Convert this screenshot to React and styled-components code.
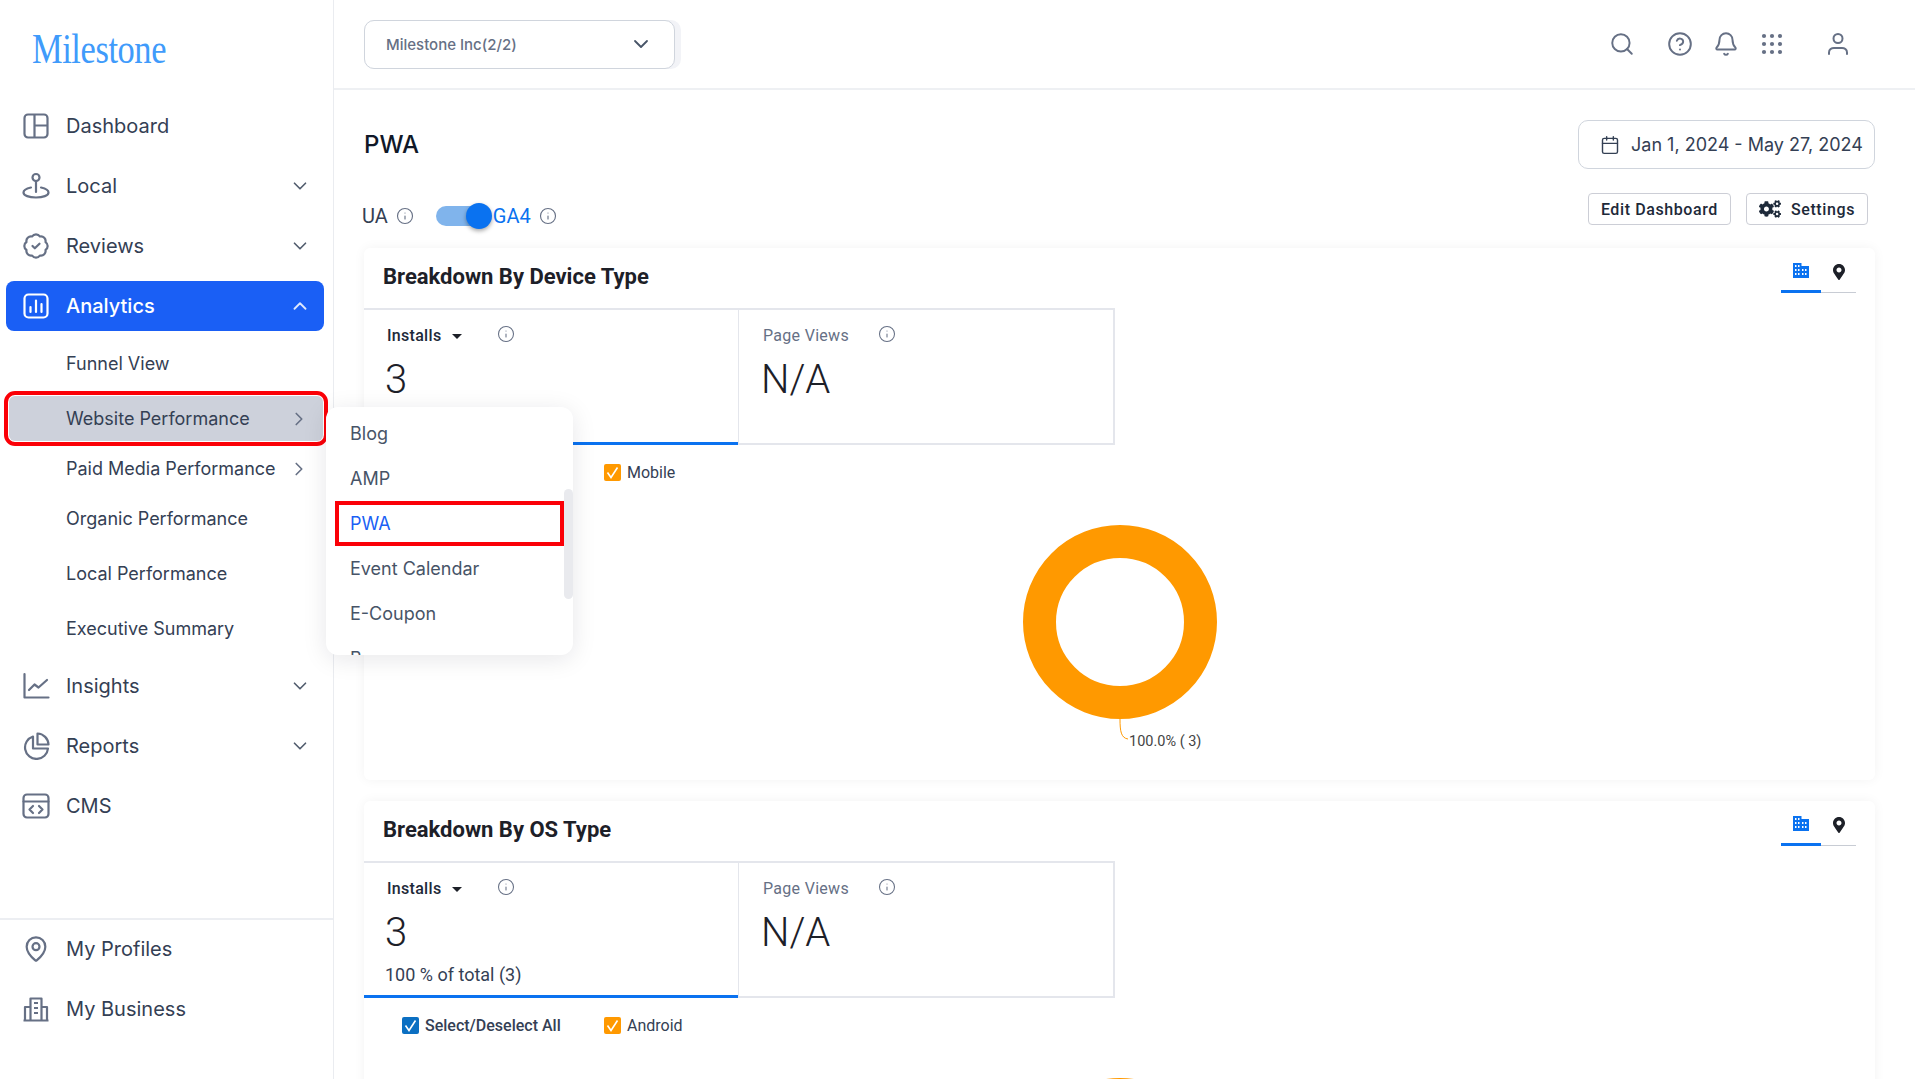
import React from 'react';
import styled, {createGlobalStyle} from 'styled-components';
import {BadgeCheck, Bell, Calendar, ChevronDown, ChevronRight, ChevronUp, CircleHelp, Info, MapPin, Search} from 'lucide-react';
import {FaCogs, FaMapMarkerAlt} from 'react-icons/fa';

const GlobalStyle = createGlobalStyle`
    html, body {
        margin: 0;
        height: 100%;
        overflow: hidden;
        background: #fff;
        font-family: "Inter", "Liberation Sans", sans-serif;
    }
    * {
        box-sizing: border-box;
    }
`;

const DashboardIcon = () => (
    <svg width="28" height="28" viewBox="0 0 28 28" fill="none" stroke="currentColor" strokeWidth="2.2">
        <rect x="2.5" y="2.5" width="23" height="23" rx="3.5" />
        <path d="M12.5 2.5v23M12.5 13.5h13" />
    </svg>
);

const LocalIcon = () => (
    <svg width="28" height="28" viewBox="0 0 28 28" fill="none" stroke="currentColor" strokeWidth="2.2" strokeLinecap="round">
        <circle cx="14" cy="5.5" r="3.5" />
        <path d="M14 9v11M9 15.5C4.5 16.500 1.500 18 1.500 20.500c0 3 5.500 5 12.500 5s12.500-2 12.500-5c0-2.500-3-4-7.500-5" />
    </svg>
);

const AnalyticsIcon = () => (
    <svg width="28" height="28" viewBox="0 0 28 28" fill="none" stroke="currentColor" strokeWidth="2.2" strokeLinecap="round">
        <rect x="2.500" y="2.500" width="23" height="23" rx="4" />
        <path d="M8.500 20v-5M14 20V8.500M19.500 20v-8" />
    </svg>
);

const InsightsIcon = () => (
    <svg width="28" height="28" viewBox="0 0 28 28" fill="none" stroke="currentColor" strokeWidth="2.2" strokeLinecap="round" strokeLinejoin="round">
        <path d="M2.500 2v23.500H26.500M7 18l5.500-5.500 4 3L25 8" />
    </svg>
);

const ReportsIcon = () => (
    <svg width="28" height="28" viewBox="0 0 28 28" fill="none" stroke="currentColor" strokeWidth="2.2" strokeLinejoin="round">
        <path d="M11 4.500A11.500 11.500 0 1 0 26 16.500H11z" />
        <path d="M15.500 1.500A11.500 11.500 0 0 1 26.500 12.500h-11z" />
    </svg>
);

const CmsIcon = () => (
    <svg width="28" height="28" viewBox="0 0 28 28" fill="none" stroke="currentColor" strokeWidth="2.2" strokeLinecap="round" strokeLinejoin="round">
        <rect x="1.500" y="2.500" width="25" height="23" rx="3.500" />
        <path d="M1.500 9.500h25M11 14l-3.500 3.500L11 21M17 14l3.500 3.500L17 21" />
    </svg>
);

const BusinessIcon = () => (
    <svg width="28" height="28" viewBox="0 0 28 28" fill="none" stroke="currentColor" strokeWidth="2.2" strokeLinejoin="round">
        <path d="M1.500 25.500h25M8.500 25.500V3.500h11v22M8.500 12h-5.500v13.500M19.500 12h5.500v13.500" />
        <path d="M12 8h4M12 13h4M12 18h4" />
    </svg>
);

const GridIcon = () => (
    <svg width="24" height="24" viewBox="0 0 24 24" fill="currentColor">
        {[4, 12, 20].map(y => [4, 12, 20].map(x => <circle key={x + '-' + y} cx={x} cy={y} r="2.100" />))}
    </svg>
);

const UserIcon = () => (
    <svg width="24" height="24" viewBox="0 0 24 24" fill="none" stroke="currentColor" strokeWidth="2" strokeLinecap="round">
        <circle cx="12" cy="6.500" r="4.500" />
        <path d="M3 22v-1.500c0-3 2.500-4.500 5-4.500h8c2.500 0 5 1.500 5 4.500V22" />
    </svg>
);

const BuildingIcon = () => (
    <svg width="18" height="16" viewBox="0 0 18 16" fill="currentColor">
        <path d="M1 1h8.500v3H17v12H1zM3 3v2h1.500V3zm3 0v2h1.500V3zM3 7v2h1.500V7zm3 0v2h1.500V7zm4 0v2h1.500V7zm3 0v2h1.500V7zM3 11v2h1.500v-2zm3 0v2h1.500v-2zm4 0v2h1.500v-2zm3 0v2h1.500v-2z" fillRule="evenodd" />
    </svg>
);

const CheckBox = ({color}) => (
    <Box $color={color}>
        <svg width="17" height="17" viewBox="0 0 17 17" fill="none" stroke="#fff" strokeWidth="1.600">
            <path d="M3.500 8.500l3.500 5 6.500-10" />
        </svg>
    </Box>
);

const DonutChart = () => (
    <svg width="300" height="280" viewBox="0 0 300 280">
        <circle cx="150" cy="112" r="80.500" fill="none" stroke="#ff9900" strokeWidth="33" />
        <path d="M150 209c0 12 1 19 8 20" fill="none" stroke="#ff9900" strokeWidth="1" />
        <text x="159" y="236" fontFamily="Roboto, sans-serif" fontSize="14.500" fill="#444">100.0% ( 3)</text>
    </svg>
);

const mainNav = [
    {label: 'Dashboard', icon: <DashboardIcon />},
    {label: 'Local', icon: <LocalIcon />, arrow: 'down'},
    {label: 'Reviews', icon: <BadgeCheck size={28} strokeWidth={1.900} />, arrow: 'down'},
    {label: 'Analytics', icon: <AnalyticsIcon />, arrow: 'up', active: true},
];

const subNav = [
    {label: 'Funnel View'},
    {label: 'Website Performance', arrow: true, selected: true, tight: true},
    {label: 'Paid Media Performance', arrow: true, tight: true},
    {label: 'Organic Performance'},
    {label: 'Local Performance'},
    {label: 'Executive Summary'},
];

const lowerNav = [
    {label: 'Insights', icon: <InsightsIcon />, arrow: 'down'},
    {label: 'Reports', icon: <ReportsIcon />, arrow: 'down'},
    {label: 'CMS', icon: <CmsIcon />},
];

const bottomNav = [
    {label: 'My Profiles', icon: <MapPin size={28} strokeWidth={1.900} />},
    {label: 'My Business', icon: <BusinessIcon />},
];

const popupItems = ['Blog', 'AMP', 'PWA', 'Event Calendar', 'E-Coupon', 'Banner'];

const NavItem = ({item}) => (
    <NavRow $active={item.active}>
        <NavIcon $active={item.active}>{item.icon}</NavIcon>
        <NavLabel>{item.label}</NavLabel>
        {item.arrow === 'down' && <Arrow><ChevronDown size={22} strokeWidth={1.800} /></Arrow>}
        {item.arrow === 'up' && <Arrow><ChevronUp size={22} strokeWidth={2} /></Arrow>}
    </NavRow>
);

const Metric = ({label, value, note, selected}) => (
    <MetricCell $selected={selected}>
        <MetricHead>
            <MetricLabel $selected={selected}>{label}</MetricLabel>
            {selected && <Caret />}
            <MetricInfo $selected={selected}><Info size={18} strokeWidth={1.400} /></MetricInfo>
        </MetricHead>
        <MetricValue>{value}</MetricValue>
        {note && <MetricNote>{note}</MetricNote>}
    </MetricCell>
);

const Breakdown = ({title, series}) => (
    <Card>
        <CardHead>
            <CardTitle>{title}</CardTitle>
            <Tabs>
                <Tab $active><BuildingIcon /></Tab>
                <Tab><FaMapMarkerAlt size={16} /></Tab>
            </Tabs>
        </CardHead>
        <Metrics>
            <Metric label="Installs" value="3" note="100 % of total (3)" selected />
            <Metric label="Page Views" value="N/A" />
        </Metrics>
        <Legend>
            <LegendItem $wide><CheckBox color="#0b6fc2" />Select/Deselect All</LegendItem>
            <LegendItem><CheckBox color="#ff9900" />{series}</LegendItem>
        </Legend>
        <ChartWrap><DonutChart /></ChartWrap>
    </Card>
);

export default function App() {
    return (
        <Page>
            <GlobalStyle />
            <Sidebar>
                <LogoWrap><Logo>Milestone</Logo></LogoWrap>
                {mainNav.map(item => <NavItem key={item.label} item={item} />)}
                <SubList>
                    {subNav.map(item => (
                        <SubRow key={item.label} $selected={item.selected} $tight={item.tight}>
                            {item.label}
                            {item.arrow && <SubArrow><ChevronRight size={22} strokeWidth={1.800} /></SubArrow>}
                        </SubRow>
                    ))}
                </SubList>
                {lowerNav.map(item => <NavItem key={item.label} item={item} />)}
                <SidebarBottom>
                    {bottomNav.map(item => <NavItem key={item.label} item={item} />)}
                </SidebarBottom>
                <Popup>
                    {popupItems.map(name => <PopupItem key={name} $selected={name === 'PWA'}>{name}</PopupItem>)}
                    <PopupThumb />
                </Popup>
            </Sidebar>
            <Main>
                <Topbar>
                    <SelectShade>
                        <Select>
                            Milestone Inc(2/2)
                            <ChevronDown size={24} strokeWidth={1.800} />
                        </Select>
                    </SelectShade>
                    <TopIcons>
                        <TopIcon><Search size={26} strokeWidth={1.800} /></TopIcon>
                        <TopIcon $gap={32}><CircleHelp size={26} strokeWidth={1.800} /></TopIcon>
                        <TopIcon $gap={20}><Bell size={26} strokeWidth={1.800} /></TopIcon>
                        <TopIcon $gap={21}><GridIcon /></TopIcon>
                        <TopIcon $gap={42}><UserIcon /></TopIcon>
                    </TopIcons>
                </Topbar>
                <Content>
                    <Inner>
                        <TitleRow>
                            <PageTitle>PWA</PageTitle>
                            <DateButton>
                                <Calendar size={20} strokeWidth={1.700} />
                                Jan 1, 2024 - May 27, 2024
                            </DateButton>
                        </TitleRow>
                        <ControlRow>
                            <SourceSwitch>
                                <SourceLabel>UA</SourceLabel>
                                <SourceInfo><Info size={18} strokeWidth={1.500} /></SourceInfo>
                                <Toggle><Knob /></Toggle>
                                <SourceLabel $on>GA4</SourceLabel>
                                <SourceInfo><Info size={18} strokeWidth={1.500} /></SourceInfo>
                            </SourceSwitch>
                            <Actions>
                                <ActionButton>Edit Dashboard</ActionButton>
                                <ActionButton><FaCogs size={22} />Settings</ActionButton>
                            </Actions>
                        </ControlRow>
                        <Breakdown title="Breakdown By Device Type" series="Mobile" />
                        <Breakdown title="Breakdown By OS Type" series="Android" />
                    </Inner>
                </Content>
            </Main>
        </Page>
    );
}

const Page = styled.div`
    display: flex;
    width: 100%;
    height: 100vh;
    overflow: hidden;
`;

const Sidebar = styled.aside`
    position: relative;
    flex: 0 0 334px;
    display: flex;
    flex-direction: column;
    border-right: 1px solid #eaecf0;
    background: #fff;
    z-index: 2;
`;

const LogoWrap = styled.div`
    height: 101px;
    flex: none;
    padding: 24px 0 0 32px;
`;

const Logo = styled.div`
    font-family: "Liberation Serif", serif;
    font-size: 42px;
    line-height: 50px;
    color: #3f9bfb;
    transform: scaleX(0.82);
    transform-origin: left center;
    letter-spacing: -0.5px;
`;

const NavRow = styled.div`
    display: flex;
    align-items: center;
    flex: none;
    width: 318px;
    height: 50px;
    margin: 0 0 10px 6px;
    padding: 0 12px 0 16px;
    gap: 16px;
    border-radius: 8px;
    font-size: 20px;
    color: ${p => p.$active ? '#fff' : '#344054'};
    background: ${p => p.$active ? '#1a5ff5' : 'transparent'};
    font-weight: ${p => p.$active ? 500 : 400};
`;

const NavIcon = styled.span`
    display: flex;
    width: 28px;
    height: 28px;
    color: ${p => p.$active ? '#fff' : '#667085'};
`;

const NavLabel = styled.span`
    flex: 1;
`;

const Arrow = styled.span`
    display: flex;
    margin-right: 1px;
    opacity: 0.85;
`;

const SubList = styled.div`
    display: flex;
    flex-direction: column;
`;

const SubRow = styled.div`
    position: relative;
    display: flex;
    align-items: center;
    justify-content: space-between;
    width: 314px;
    height: 45px;
    margin: 0 0 ${p => p.$tight ? '5px' : '10px'} 9px;
    padding: 0 13px 0 57px;
    border-radius: 6px;
    font-size: 18px;
    color: #344054;
    background: ${p => p.$selected ? '#cdd1db' : 'transparent'};
    outline: ${p => p.$selected ? '4px solid #fb0007' : 'none'};
    outline-offset: 1px;
`;

const SubArrow = styled.span`
    display: flex;
    color: #667085;
`;

const SidebarBottom = styled.div`
    margin-top: auto;
    padding: 4px 0 35px;
    border-top: 2px solid #eceef2;
`;

const Popup = styled.div`
    position: absolute;
    left: 326px;
    top: 407px;
    width: 247px;
    height: 248px;
    padding-top: 4px;
    overflow: hidden;
    background: #fff;
    border-radius: 12px;
    box-shadow: 0 4px 24px rgba(16, 24, 40, 0.1);
`;

const PopupItem = styled.div`
    display: flex;
    align-items: center;
    width: 229px;
    height: 45px;
    margin-left: 9px;
    padding-left: 15px;
    font-size: 18px;
    color: ${p => p.$selected ? '#1a5ff5' : '#475467'};
    box-shadow: ${p => p.$selected ? 'inset 0 0 0 4px #fb0007' : 'none'};
`;

const PopupThumb = styled.div`
    position: absolute;
    right: 0;
    top: 82px;
    width: 9px;
    height: 110px;
    border-radius: 5px;
    background: #e9eaee;
`;

const Main = styled.div`
    flex: 1;
    min-width: 0;
    display: flex;
    flex-direction: column;
`;

const Topbar = styled.header`
    flex: none;
    display: flex;
    align-items: center;
    height: 90px;
    padding: 0 65px 0 30px;
    border-bottom: 2px solid #eef0f3;
`;

const SelectShade = styled.div`
    padding-right: 6px;
    border-radius: 10px;
    background: #f2f3f7;
`;

const Select = styled.div`
    display: flex;
    align-items: center;
    justify-content: space-between;
    width: 311px;
    height: 49px;
    padding: 0 21px;
    font-size: 15px;
    font-weight: 500;
    color: #667085;
    background: #fff;
    border: 1px solid #d0d5dd;
    border-radius: 10px;
    svg {
        color: #475467;
    }
`;

const TopIcons = styled.div`
    display: flex;
    align-items: center;
    margin-left: auto;
`;

const TopIcon = styled.span`
    display: flex;
    margin-left: ${p => p.$gap || 0}px;
    color: #667085;
`;

const Content = styled.main`
    flex: 1;
    min-height: 0;
    overflow-y: scroll;
    &::-webkit-scrollbar {
        width: 9px;
    }
    &::-webkit-scrollbar-thumb {
        background: #e9eaee;
        border-radius: 5px;
    }
`;

const Inner = styled.div`
    min-height: 2700px;
    padding: 30px 40px 0 30px;
`;

const TitleRow = styled.div`
    display: flex;
    align-items: center;
    justify-content: space-between;
`;

const PageTitle = styled.h1`
    margin: 0;
    font-size: 24px;
    font-weight: 500;
    color: #101828;
`;

const DateButton = styled.div`
    display: flex;
    align-items: center;
    gap: 11px;
    width: 297px;
    height: 49px;
    padding-left: 21px;
    font-size: 18px;
    color: #344054;
    border: 1px solid #d0d5dd;
    border-radius: 10px;
`;

const ControlRow = styled.div`
    display: flex;
    align-items: flex-start;
    justify-content: space-between;
    height: 55px;
    margin-top: 24px;
`;

const SourceSwitch = styled.div`
    display: flex;
    align-items: center;
    height: 46px;
    margin-left: -2px;
    font-family: Roboto, sans-serif;
`;

const SourceLabel = styled.span`
    font-size: 20px;
    color: ${p => p.$on ? '#0a72f0' : '#344054'};
`;

const SourceInfo = styled.span`
    display: flex;
    margin-left: 8px;
    color: #667085;
`;

const Toggle = styled.div`
    position: relative;
    width: 47px;
    height: 20px;
    margin: 0 10px 0 22px;
    border-radius: 10px;
    background: #80b4ec;
`;

const Knob = styled.div`
    position: absolute;
    right: -9px;
    top: -3px;
    width: 26px;
    height: 26px;
    border-radius: 50%;
    background: #0a72f0;
    box-shadow: 0 2px 4px rgba(0, 0, 0, 0.35);
`;

const Actions = styled.div`
    display: flex;
    gap: 15px;
    margin-right: 7px;
`;

const ActionButton = styled.div`
    display: flex;
    align-items: center;
    gap: 10px;
    height: 32px;
    padding: 0 12px;
    font-family: Roboto, sans-serif;
    font-size: 16px;
    font-weight: 500;
    letter-spacing: 0.6px;
    color: #1d2939;
    border: 1px solid #ccced6;
    border-radius: 4px;
`;

const Card = styled.section`
    height: 532px;
    margin-bottom: 21px;
    background: #fff;
    border-radius: 6px;
    box-shadow: 0 0 12px rgba(16, 24, 40, 0.05);
    font-family: Roboto, sans-serif;
`;

const CardHead = styled.div`
    display: flex;
    justify-content: space-between;
    height: 60px;
    padding: 0 19px 0 19px;
`;

const CardTitle = styled.h2`
    margin: 12px 0 0;
    font-size: 22px;
    line-height: 34px;
    font-weight: 700;
    color: #1d2028;
`;

const Tabs = styled.div`
    display: flex;
    height: 45px;
    border-bottom: 1px solid #c8ccd4;
`;

const Tab = styled.div`
    display: flex;
    align-items: center;
    justify-content: center;
    width: ${p => p.$active ? '40px' : '35px'};
    height: 45px;
    padding-top: 2px;
    color: ${p => p.$active ? '#0a72f0' : '#1d2028'};
    border-bottom: ${p => p.$active ? '3px solid #0a72f0' : 'none'};
`;

const Metrics = styled.div`
    display: flex;
    width: 751px;
    height: 137px;
    border-top: 2px solid #e4e6ec;
`;

const MetricCell = styled.div`
    flex: ${p => p.$selected ? '0 0 374px' : '1'};
    padding: 13px 0 0 ${p => p.$selected ? '23px' : '24px'};
    border-right: ${p => p.$selected ? 'none' : '2px solid #e4e6ec'};
    border-left: ${p => p.$selected ? 'none' : '1px solid #e4e6ec'};
    border-bottom: ${p => p.$selected ? '3px solid #0a72f0' : '2px solid #e4e6ec'};
`;

const MetricHead = styled.div`
    display: flex;
    align-items: center;
    height: 24px;
`;

const MetricLabel = styled.span`
    font-size: 16px;
    font-weight: ${p => p.$selected ? 500 : 400};
    letter-spacing: 0.3px;
    color: ${p => p.$selected ? '#1d2939' : '#667085'};
`;

const Caret = styled.span`
    width: 0;
    height: 0;
    margin: 3px 0 0 11px;
    border-left: 5px solid transparent;
    border-right: 5px solid transparent;
    border-top: 5px solid #1d2028;
`;

const MetricInfo = styled.span`
    display: flex;
    margin-left: ${p => p.$selected ? '35px' : '29px'};
    margin-top: -2px;
    color: #667085;
`;

const MetricValue = styled.div`
    margin: 10px 0 0 -2px;
    font-size: 40px;
    line-height: 46px;
    font-weight: 300;
    color: #1d2028;
`;

const MetricNote = styled.div`
    margin: 8px 0 0 -2px;
    font-size: 18px;
    line-height: 22px;
    color: #344054;
`;

const Legend = styled.div`
    display: flex;
    height: 55px;
    padding: 18px 0 0 38px;
`;

const LegendItem = styled.div`
    display: flex;
    align-items: center;
    gap: 6px;
    height: 19px;
    width: ${p => p.$wide ? '202px' : 'auto'};
    font-size: 16px;
    font-weight: ${p => p.$wide ? 500 : 400};
    color: #344054;
`;

const Box = styled.span`
    display: flex;
    align-items: center;
    justify-content: center;
    width: 17px;
    height: 17px;
    border-radius: 2px;
    background: ${p => p.$color};
`;

const ChartWrap = styled.div`
    display: flex;
    justify-content: center;
    margin-top: 10px;
`;
